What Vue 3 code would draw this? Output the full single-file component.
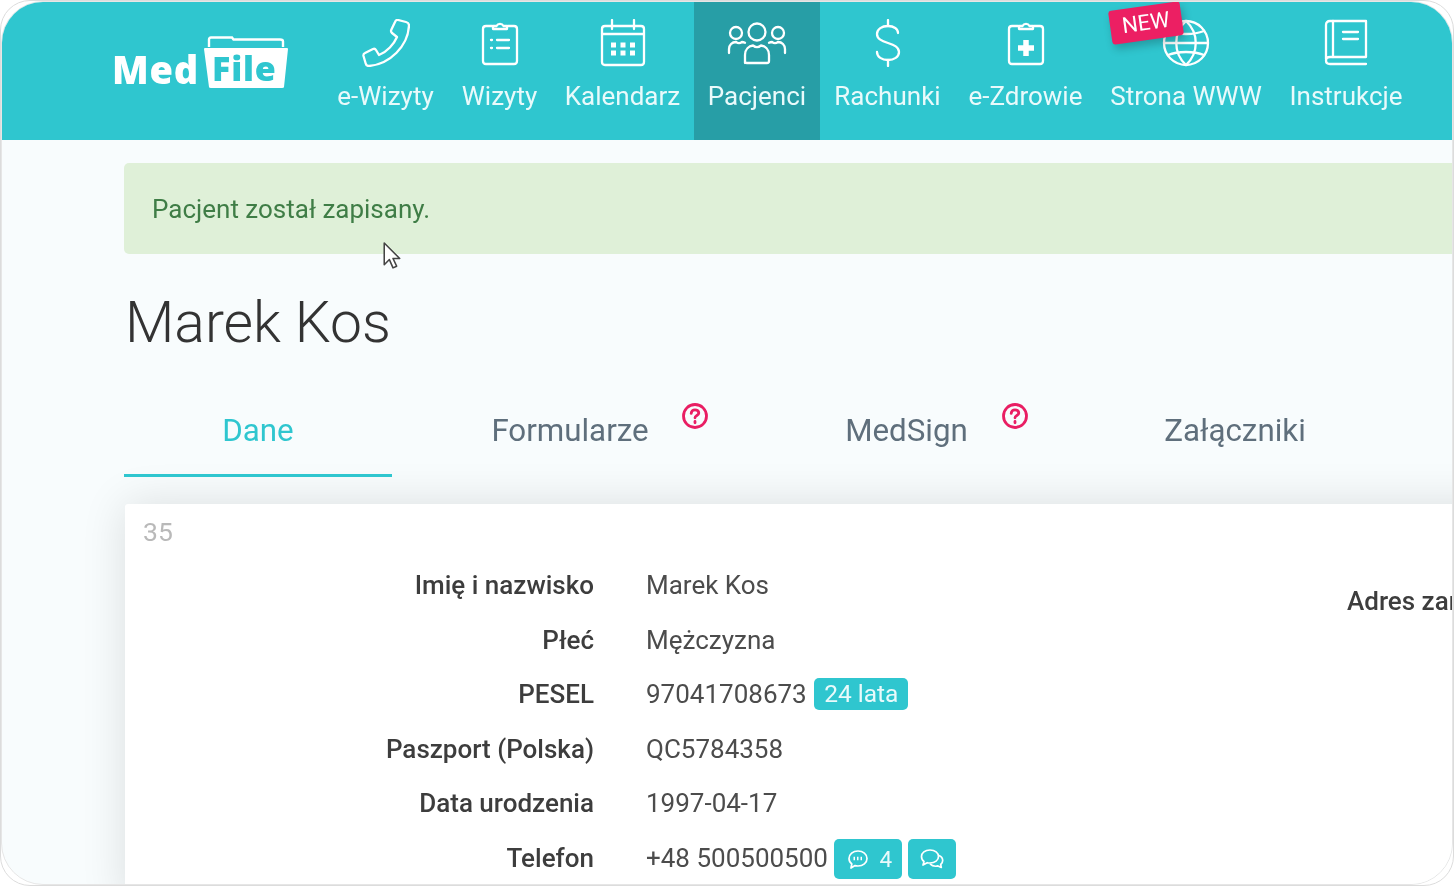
<template>
  <div class="frame">
    <div class="page">
      <header class="topbar">
        <div class="logo">
          <span class="logo-med">Med</span>
          <span class="logo-file">
            <svg viewBox="0 0 84 53" width="84" height="53">
              <path d="M5 11V3.500Q5 1.500 7 1.500h21l1.500 2H76q3 0 3 2V11" fill="none" stroke="#fff" stroke-width="2.400" />
              <path d="M1 12h82q1 0 1 1l-4 38q0 1-2 1H7q-2 0-2-1L0 13q0-1 1-1z" fill="#fff" />
            </svg>
            <span class="logo-word">File</span>
          </span>
        </div>
        <nav class="menu">
          <a v-for="item in menu" :key="item.label" class="menu-item" :class="{ active: item.active }" :style="{ width: item.width + 'px' }">
            <span v-if="item.badge" class="new-badge">NEW</span>
            <svg :viewBox="item.wide ? '-6 0 60 48' : '0 0 48 48'" :width="item.wide ? 60 : 48" height="48" fill="none" stroke="currentColor" stroke-width="2.300" stroke-linecap="round" stroke-linejoin="round">
              <path v-for="d in item.paths" :key="d" :d="d" />
              <path v-if="item.solid" :d="item.solid" :stroke-width="item.solidWidth" stroke-linecap="butt" />
              <circle v-for="c in item.circles" :key="c.join()" :cx="c[0]" :cy="c[1]" :r="c[2]" />
            </svg>
            <span class="menu-label">{{ item.label }}</span>
          </a>
        </nav>
      </header>

      <main class="content">
        <div class="alert">Pacjent został zapisany.</div>
        <h1>Marek Kos</h1>

        <div class="tabs">
          <a class="tab active" style="width: 268px">Dane</a>
          <a class="tab" style="width: 356px">
            Formularze
            <svg class="help" style="right: 39px" viewBox="0 0 28 28" width="28" height="28" fill="none" stroke="#e91e63" stroke-width="2.800">
              <circle cx="14" cy="14" r="11.500" />
              <path d="M10.200 11.400c0-2.200 1.700-3.600 3.800-3.600s3.800 1.300 3.800 3.200c0 2.600-3.800 2.400-3.800 4.800" stroke-linecap="round" />
              <path d="M14 19.400v1.400" stroke-linecap="round" />
            </svg>
          </a>
          <a class="tab" style="width: 317px">
            MedSign
            <svg class="help" style="right: 36px" viewBox="0 0 28 28" width="28" height="28" fill="none" stroke="#e91e63" stroke-width="2.800">
              <circle cx="14" cy="14" r="11.500" />
              <path d="M10.200 11.400c0-2.200 1.700-3.600 3.800-3.600s3.800 1.300 3.800 3.200c0 2.600-3.800 2.400-3.800 4.800" stroke-linecap="round" />
              <path d="M14 19.400v1.400" stroke-linecap="round" />
            </svg>
          </a>
          <a class="tab" style="width: 340px">Załączniki</a>
        </div>

        <section class="card">
          <div class="record-id">35</div>
          <div class="columns">
            <dl class="fields">
              <template v-for="row in rows" :key="row.label">
                <dt>{{ row.label }}</dt>
                <dd>
                  {{ row.value }}
                  <span v-if="row.age" class="tag tag-age">{{ row.age }}</span>
                  <template v-if="row.phone">
                    <span class="tag tag-btn">
                      <svg viewBox="0 0 24 24" width="24" height="24" fill="none" stroke="#fff" stroke-width="1.700" stroke-linejoin="round">
                        <path d="M12 4c5 0 9 3 9 7.500S17 19 12 19c-1 0-2-.1-3-.4L5 21l.8-4C4 15.600 3 13.700 3 11.500 3 7 7 4 12 4z" />
                        <path d="M7.500 11.500h1.500M11 11.500h1.500M14.500 11.500h1.500" stroke-width="3.500" />
                      </svg>
                      <span>4</span>
                    </span>
                    <span class="tag tag-btn tag-icon">
                      <svg viewBox="0 0 28 24" width="28" height="24" fill="none" stroke="#fff" stroke-width="1.700" stroke-linejoin="round">
                        <path d="M12 3c5 0 8.500 2.700 8.500 6.500S17 16 12 16c-1 0-2 0-2.800-.3L5 18l1-3.500C4.200 13.300 3.500 11.500 3.500 9.500 3.500 5.700 7 3 12 3z" />
                        <path d="M21 8.500c2.300 1 3.700 2.800 3.700 5 0 1.600-.8 3-2 4l.6 3-3.300-1.600c-3 .8-6 0-8-2" />
                      </svg>
                    </span>
                  </template>
                </dd>
              </template>
            </dl>
            <div class="address">Adres zamieszkania</div>
          </div>
        </section>
      </main>
    </div>

    <svg class="cursor" viewBox="0 0 20 30" width="21" height="31" fill="#fff" stroke="#444" stroke-width="1.500" stroke-linejoin="round">
      <path d="M2 1v21l5-5 3.500 8 3.500-1.600L10.500 16H17z" />
    </svg>
  </div>
</template>

<script setup>
const clipBody = 'M16 7H10q-3 0-3 3v32q0 3 3 3h28q3 0 3-3V10q0-3-3-3h-6'
const clipTop = 'M17 10h14V7h-3.500a4 4 0 0 0-7 0H17z'

const menu = [
  {
    label: 'e-Wizyty',
    width: 125,
    paths: ['M36 1l8 2c2 .5 3 1.500 3 3.500C46 27 28 45 7 47c-2 0-3-1-3.300-2.500L1.500 37c-.3-1.500.3-2.500 1.500-3l8-4c1.300-.5 2.300-.2 3 1l3 5C25 33 32 25 35 18l-5-4c-1-.8-1.200-1.800-.8-3L33 3c.6-1.500 1.800-2.300 3-2z'],
  },
  {
    label: 'Wizyty',
    width: 103,
    paths: [clipBody, clipTop, 'M15 21h1M15 29h1M21 21h12M21 29h12'],
  },
  {
    label: 'Kalendarz',
    width: 143,
    paths: [
      'M6 7h36q3 0 3 3v33q0 3-3 3H6q-3 0-3-3V10q0-3 3-3z',
      'M3 15h42M13 1v9M35 1v9',
    ],
    solid: 'M12 26h5M21.500 26h5M31 26h5M12 34h5M21.500 34h5M31 34h5',
    solidWidth: 5,
  },
  {
    label: 'Pacjenci',
    width: 126,
    wide: true,
    active: true,
    paths: [
      'M12 44V36c0-6 4-9 8-9.500 2.500 2 5.500 2 8 0 4 .5 8 3.500 8 9.500v6q0 2-2 2H14q-2 0-2-2z',
      'M-4 34v-4c0-4 3-7 7-7 2 1.500 4 1.500 6 0 1 0 2 .3 3 .8',
      'M52 34v-4c0-4-3-7-7-7-2 1.500-4 1.500-6 0-1 0-2 .3-3 .8',
    ],
    circles: [[24, 13, 8.500], [3, 14, 6], [45, 14, 6]],
  },
  {
    label: 'Rachunki',
    width: 135,
    paths: ['M34 14c0-4-4-7-10-7s-11 3-11 8 5 7 11 9 11 4 11 9-5 8-11 8-11-3-11-8', 'M24 1v6M24 41v6'],
  },
  {
    label: 'e-Zdrowie',
    width: 141,
    paths: [clipBody, clipTop],
    solid: 'M24 21v16M16 29h16',
    solidWidth: 5.500,
  },
  {
    label: 'Strona WWW',
    width: 180,
    badge: true,
    paths: ['M2 24h44M6 12c10 4 26 4 36 0M6 36c10-4 26-4 36 0M24 2c-13 12-13 32 0 44M24 2c13 12 13 32 0 44'],
    circles: [[24, 24, 22]],
  },
  {
    label: 'Instrukcje',
    width: 140,
    paths: [
      'M4 40V6q0-4 4-4h36v36H8q-4 0-4 3.500T8 45h36',
      'M11 2v36M21 13h15M21 20h15',
    ],
  },
]

const rows = [
  { label: 'Imię i nazwisko', value: 'Marek Kos' },
  { label: 'Płeć', value: 'Mężczyzna' },
  { label: 'PESEL', value: '97041708673', age: '24 lata' },
  { label: 'Paszport (Polska)', value: 'QC5784358' },
  { label: 'Data urodzenia', value: '1997-04-17' },
  { label: 'Telefon', value: '+48 500500500', phone: true },
]
</script>

<style scoped>
.frame {
  position: relative;
  width: 1454px;
  height: 886px;
  overflow: hidden;
  box-sizing: border-box;
  border: 1px solid #dcdcdc;
  border-radius: 30px;
  background: #fff;
  font-family: Roboto, "Liberation Sans", sans-serif;
  color: #444;
  filter: blur(0.5px);
}
.page {
  height: 100%;
  overflow: hidden;
  box-sizing: border-box;
  border: 1px solid #e6e6e6;
  border-radius: 42px;
  background: #f8fcfd;
}
.topbar {
  display: flex;
  height: 138px;
  background: #2fc6cf;
  color: #fff;
}
.logo {
  display: flex;
  align-items: flex-start;
  width: 321px;
  flex-shrink: 0;
  box-sizing: border-box;
  padding: 34px 0 0 110px;
  font-family: "Open Sans", sans-serif;
  font-weight: 800;
}
.logo-med {
  margin-top: 15px;
  font-size: 38px;
  line-height: 36px;
  letter-spacing: 0.8px;
}
.logo-file {
  position: relative;
  display: block;
  width: 84px;
  height: 53px;
  margin-left: 5px;
}
.logo-word {
  position: absolute;
  left: 8px;
  top: 15px;
  font-size: 34px;
  line-height: 34px;
  letter-spacing: 0.8px;
  color: #2fc6cf;
}
.menu {
  display: flex;
}
.menu-item {
  position: relative;
  display: flex;
  flex-direction: column;
  align-items: center;
  padding-top: 17px;
  box-sizing: border-box;
}
.menu-item.active {
  background: #279ea6;
}
.menu-label {
  margin-top: 11px;
  font-size: 26px;
  line-height: 36px;
  color: #e9fafb;
  white-space: nowrap;
}
.new-badge {
  position: absolute;
  left: 14px;
  top: 4px;
  padding: 4px 12px;
  background: #ec1f63;
  border-radius: 3px;
  font-size: 22px;
  line-height: 26px;
  transform: rotate(-8deg);
  box-shadow: 2px 5px 8px rgba(0, 0, 0, 0.22);
  z-index: 1;
}
.content {
  padding: 23px 0 0 122px;
}
.alert {
  width: 1400px;
  height: 91px;
  box-sizing: border-box;
  padding: 1px 28px 0;
  border-radius: 5px;
  background: #dff0d8;
  color: #3f7d46;
  font-size: 26px;
  line-height: 90px;
}
h1 {
  margin: 34px 0 0 1px;
  font-size: 57px;
  font-weight: 300;
  line-height: 70px;
  color: #333;
}
.tabs {
  display: flex;
  margin-top: 36px;
  height: 86px;
  width: 1400px;
}
.tab {
  position: relative;
  display: flex;
  justify-content: center;
  box-sizing: border-box;
  padding-top: 17px;
  font-size: 31.300px;
  line-height: 40px;
  color: #5f6f7c;
}
.tab.active {
  height: 83px;
  color: #2fc6cf;
  border-bottom: 3px solid #2fc6cf;
}
.help {
  position: absolute;
  top: 8px;
}
.card {
  width: 1400px;
  height: 400px;
  margin: 24px 0 0 1px;
  background: #fff;
  box-shadow: 0 0 45px rgba(0, 0, 0, 0.12);
  border-radius: 3px;
}
.record-id {
  padding: 13px 0 0 18px;
  font-size: 26.500px;
  line-height: 30px;
  color: #b9b9b9;
}
.columns {
  display: flex;
}
.fields {
  display: grid;
  width: 1222px;
  flex-shrink: 0;
  grid-template-columns: 469px 1fr;
  grid-auto-rows: 54.600px;
  column-gap: 52px;
  margin: 18px 0 0;
  font-size: 26px;
}
.fields dt {
  text-align: right;
  font-weight: 500;
  line-height: 40px;
  color: #3d3d3d;
}
.fields dd {
  margin: 0;
  display: flex;
  align-items: flex-start;
  line-height: 40px;
  white-space: pre;
  color: #4c4c4c;
}
.tag {
  display: inline-flex;
  align-items: center;
  box-sizing: border-box;
  height: 32px;
  margin-top: 4px;
  background: #2fc6cf;
  color: #e9fafb;
  border-radius: 5px;
  line-height: 32px;
}
.tag-age {
  width: 94px;
  margin-left: 1px;
  padding-left: 10px;
  font-size: 24.500px;
}
.tag-btn {
  width: 68px;
  height: 40px;
  margin-top: 1px;
  gap: 9px;
  padding: 0 0 0 12px;
  font-size: 22.500px;
  white-space: normal;
}
.tag-btn svg {
  flex-shrink: 0;
}
.tag-icon {
  width: 48px;
  margin-left: 6px;
  padding: 0 0 0 10px;
}
.address {
  margin-top: 39px;
  font-size: 26px;
  font-weight: 500;
  white-space: nowrap;
  color: #3d3d3d;
}
.cursor {
  position: absolute;
  left: 381px;
  top: 241px;
}
</style>
